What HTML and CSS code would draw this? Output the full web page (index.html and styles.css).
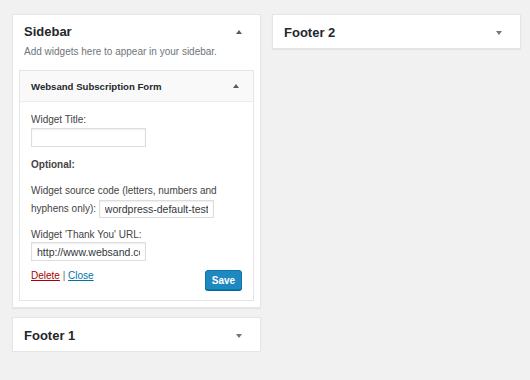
FILE: index.html
```html
<!DOCTYPE html>
<html>
<head>
<meta charset="utf-8">
<link rel="stylesheet" href="styles.css">
</head>
<body>
<div class="page">
  <div class="col">
    <div class="area">
      <div class="area-head open">
        <h2 class="area-title">Sidebar</h2>
        <span class="arrow up dark"></span>
      </div>
      <p class="area-desc">Add widgets here to appear in your sidebar.</p>
      <div class="widget">
        <div class="widget-head">
          <h3 class="widget-title">Websand Subscription Form</h3>
          <span class="arrow up dark"></span>
        </div>
        <div class="widget-body">
          <label class="lbl">Widget Title:</label>
          <input class="field first" type="text" value="">
          <p class="opt">Optional:</p>
          <p class="src">Widget source code (letters, numbers and<br>hyphens only): <input class="field inline" type="text" value="wordpress-default-test"></p>
          <label class="lbl">Widget 'Thank You' URL:</label>
          <input class="field" type="text" value="http://www.websand.co.uk">
          <div class="actions">
            <div class="links"><a class="del" href="#">Delete</a> <span class="sep">|</span> <a class="close" href="#">Close</a></div>
            <button class="save">Save</button>
          </div>
        </div>
      </div>
    </div>
    <div class="area closed">
      <div class="area-head">
        <h2 class="area-title">Footer 1</h2>
        <span class="arrow down"></span>
      </div>
    </div>
  </div>
  <div class="col">
    <div class="area closed">
      <div class="area-head">
        <h2 class="area-title">Footer 2</h2>
        <span class="arrow down"></span>
      </div>
    </div>
  </div>
</div>
</body>
</html>
```

FILE: styles.css
```css
* { box-sizing: border-box; }
html, body {
  margin: 0;
  padding: 0;
  background: #f1f1f1;
  font-family: "Liberation Sans", Arial, sans-serif;
  color: #32373c;
}
.page {
  display: flex;
  align-items: flex-start;
  gap: 11px;
  padding: 14px 0 0 12px;
}
.col {
  width: 249px;
  display: flex;
  flex-direction: column;
  gap: 9px;
}
.area {
  background: #fff;
  border: 1px solid #e5e5e5;
  box-shadow: 0 1px 1px rgba(0,0,0,0.05);
  padding: 0 6px 6px 6px;
}
.area.closed {
  padding: 0;
  height: 35px;
}
.area-head {
  display: flex;
  align-items: center;
  justify-content: space-between;
  height: 34px;
  padding: 1px 18px 0 11px;
}
.area-head.open {
  height: 29px;
  padding: 5px 12px 0 5px;
}
.area-title {
  margin: 0;
  font-size: 13px;
  font-weight: 700;
  color: #23282d;
  line-height: 18px;
}
.area-desc {
  margin: 1px 0 11px 5px;
  font-size: 10px;
  line-height: 14px;
  color: #6f757a;
}
.arrow {
  display: block;
  width: 0;
  height: 0;
  border-left: 3px solid transparent;
  border-right: 3px solid transparent;
}
.arrow.up { border-bottom: 4px solid #72777c; }
.arrow.down { border-top: 4px solid #72777c; }
.arrow.dark.up { border-bottom-color: #555d66; }
.widget {
  border: 1px solid #e5e5e5;
  background: #fff;
}
.widget-head {
  display: flex;
  align-items: center;
  justify-content: space-between;
  height: 31px;
  background: #f9f9f9;
  border-bottom: 1px solid #ececec;
  padding: 0 14px 0 11px;
}
.widget-title {
  margin: 0;
  font-size: 9.6px;
  font-weight: 700;
  color: #23282d;
}
.widget-body {
  padding: 11px 11px 10px 11px;
  font-size: 10px;
  color: #444;
}
.lbl {
  display: block;
  line-height: 14px;
}
.field.first { margin-top: 1px; }
.field {
  display: block;
  width: 115px;
  height: 19px;
  margin: 0;
  padding: 0 5px;
  border: 1px solid #ddd;
  box-shadow: inset 0 1px 2px rgba(0,0,0,0.07);
  background: #fff;
  font-family: "Liberation Sans", Arial, sans-serif;
  font-size: 10.5px;
  color: #32373c;
  outline: none;
}
.field.inline {
  display: inline-block;
  vertical-align: middle;
  height: 18px;
}
.opt {
  margin: 11px 0 0 0;
  font-weight: 700;
  line-height: 14px;
}
.src {
  margin: 10px 0 10px 0;
  line-height: 18px;
}
.actions {
  display: flex;
  justify-content: space-between;
  align-items: flex-start;
  margin-top: 9px;
}
.links {
  line-height: 12px;
}
.del { color: #a00; }
.close { color: #0073aa; }
.sep { color: #666; }
.save {
  height: 20px;
  width: 37px;
  margin: 0;
  padding: 0;
  background: #1e88bf;
  border: 1px solid #0a77ab;
  border-radius: 3px;
  box-shadow: 0 1px 0 #006799;
  color: #fff;
  font-family: "Liberation Sans", Arial, sans-serif;
  font-size: 10px;
  font-weight: 700;
}
```
